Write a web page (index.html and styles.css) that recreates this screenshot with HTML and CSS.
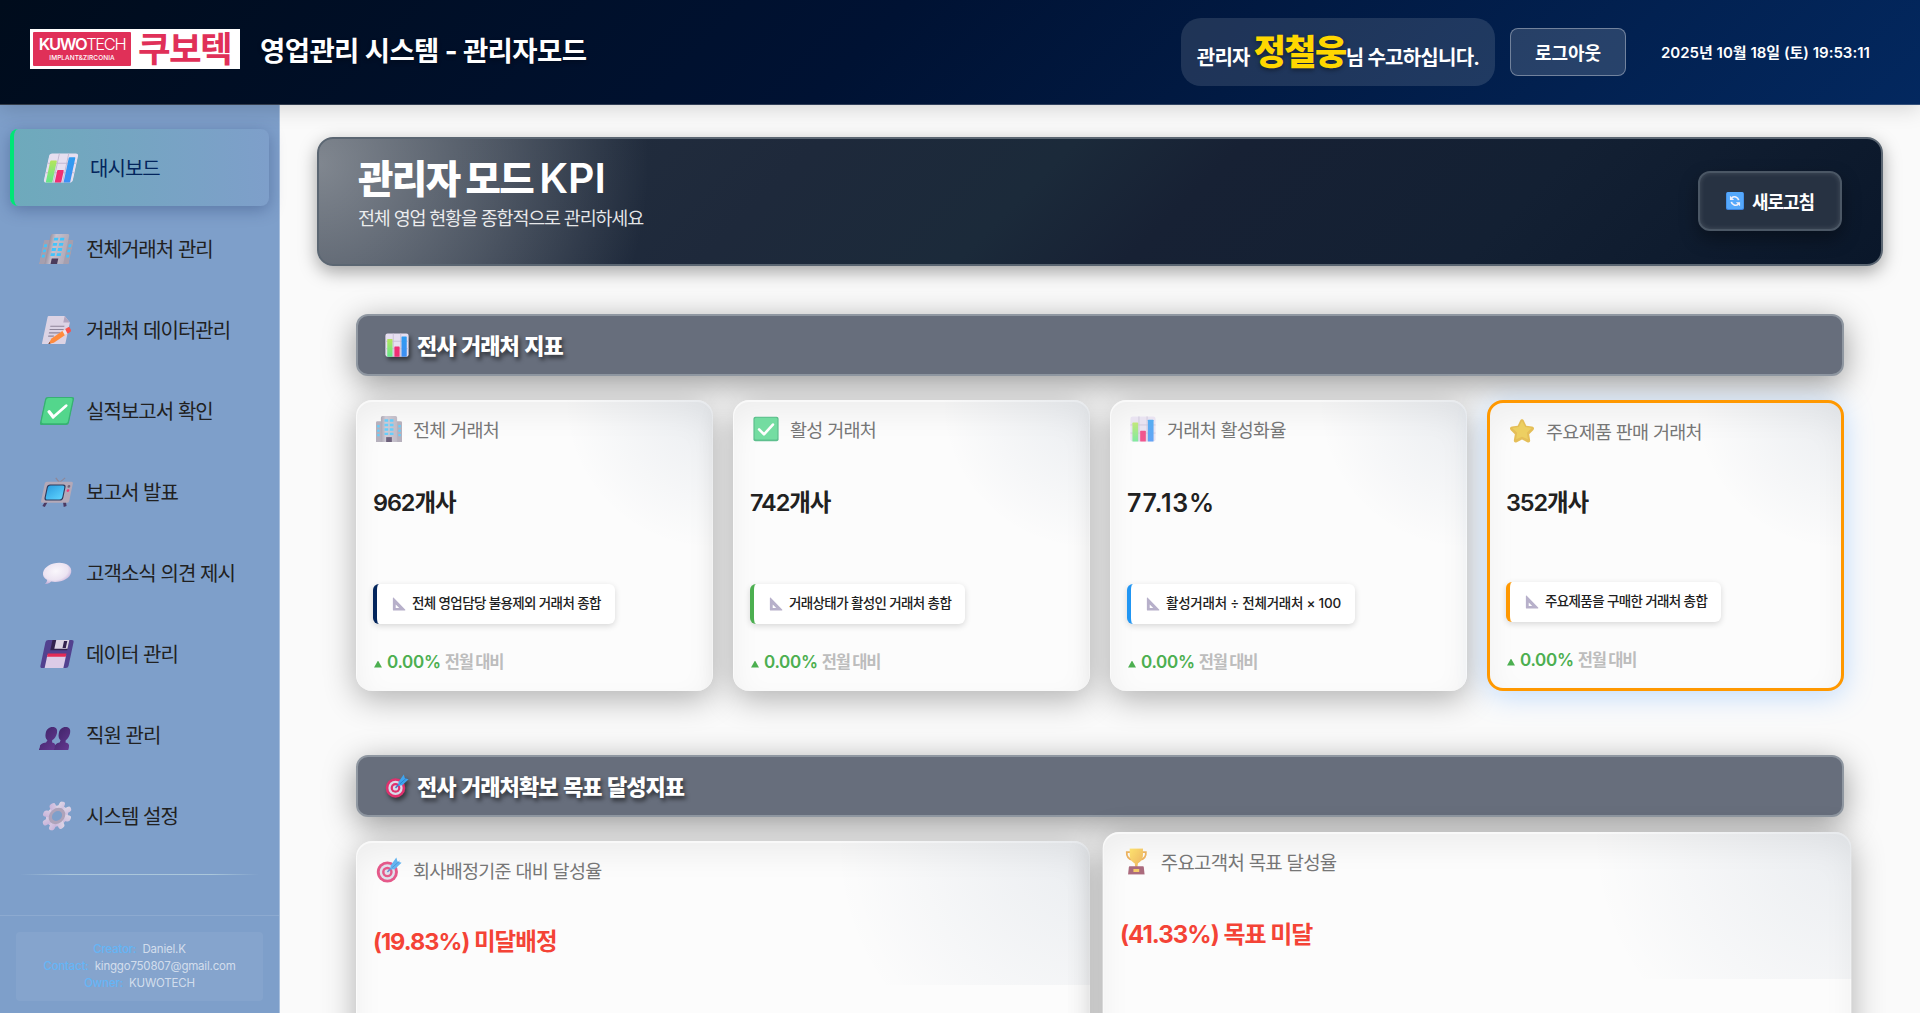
FILE: index.html
```html
<!DOCTYPE html>
<html lang="ko">
<head>
<meta charset="utf-8">
<title>영업관리 시스템 - 관리자모드</title>
<link rel="stylesheet" href="styles.css">
</head>
<body>
<svg class="sprite" aria-hidden="true">
  <defs>
    <linearGradient id="gGreen" x1="0" y1="0" x2="0" y2="1"><stop offset="0" stop-color="#b4e55c"/><stop offset="1" stop-color="#63e68b"/></linearGradient>
    <linearGradient id="gBlue" x1="0" y1="0" x2="0" y2="1"><stop offset="0" stop-color="#2f9cf0"/><stop offset="1" stop-color="#3f8ff5"/></linearGradient>
    <linearGradient id="gScreen" x1="0" y1="0" x2="1" y2="1"><stop offset="0" stop-color="#2d9ee0"/><stop offset="1" stop-color="#5fd4ff"/></linearGradient>
    <linearGradient id="gWall" x1="0" y1="0" x2="1" y2="0"><stop offset="0" stop-color="#9a94a3"/><stop offset=".3" stop-color="#c6c0cd"/><stop offset="1" stop-color="#b2acba"/></linearGradient>
    <radialGradient id="gBubble" cx=".45" cy=".4" r=".6"><stop offset="0" stop-color="#faf7fc"/><stop offset=".7" stop-color="#ece4f2"/><stop offset="1" stop-color="#cbb6dc"/></radialGradient>
    <linearGradient id="gGold" x1="0" y1="0" x2="1" y2="1"><stop offset="0" stop-color="#ffdd4d"/><stop offset="1" stop-color="#e9a13b"/></linearGradient>
    <linearGradient id="gPerson" x1="0" y1="0" x2="1" y2="1"><stop offset="0" stop-color="#41256a"/><stop offset="1" stop-color="#63388f"/></linearGradient>
    <linearGradient id="gGear" x1="0" y1="0" x2="1" y2="1"><stop offset="0" stop-color="#ded7e6"/><stop offset="1" stop-color="#c8b3da"/></linearGradient>
  </defs>
  <symbol id="i-chart" viewBox="0 0 32 32">
    <rect x="0.500" y="0.500" width="31" height="31" rx="3" fill="#e6dff0"/>
    <path d="M11 .5v31M21 .5v31M.5 11h31M.5 21h31" stroke="#c3b9d2" stroke-width="1"/>
    <rect x="3" y="8" width="7" height="23.500" rx=".8" fill="url(#gGreen)"/>
    <rect x="12.500" y="18" width="7" height="13.500" rx=".8" fill="#ef2f74"/>
    <rect x="22" y="4.500" width="7" height="27" rx=".8" fill="url(#gBlue)"/>
  </symbol>
  <symbol id="i-building" viewBox="0 0 32 32">
    <path d="M0 8a1.500 1.500 0 0 1 1.500-1.500H8V32H0zM24 6.500h6.500A1.500 1.500 0 0 1 32 8v24h-8z" fill="#a69fae"/>
    <path d="M6 2a2 2 0 0 1 2-2h16a2 2 0 0 1 2 2v30H6z" fill="url(#gWall)"/>
    <path d="M10.500 4h4.500v3h-4.500zM17 4h4.500v3H17zM10.500 9.500h4.500v3h-4.500zM17 9.500h4.500v3H17zM10.500 15h4.500v3h-4.500zM17 15h4.500v3H17zM10.500 20.500h4.500v3h-4.500zM17 20.500h4.500v3H17zM1.500 11h3v3h-3zM1.500 16.500h3v3h-3zM1.500 22h3v3h-3zM27.500 11h3v3h-3zM27.500 16.500h3v3h-3zM27.500 22h3v3h-3z" fill="#43c4fb"/>
    <path d="M12.500 26h7v6h-7z" fill="#4a3b5c"/>
  </symbol>
  <symbol id="i-memo" viewBox="0 0 32 32">
    <path d="M3 2a1 1 0 0 1 1-1h17l7 7v22a1 1 0 0 1-1 1H4a1 1 0 0 1-1-1z" fill="#dcd3e4"/>
    <path d="M21 1l7 7h-7z" fill="#b3a6bf"/>
    <path d="M8 12h15M8 15.500h15M8 19h12M8 22.500h6" stroke="#8e8599" stroke-width="1.200"/>
    <path d="M10 31l2-6 12-9.500 3.500 4.500-12 9.500z" fill="#ff8b3d"/>
    <path d="M22 17l3-2.300 3.500 4.500-3 2.300z" fill="#ece6f2"/>
    <path d="M24.500 15l2-1.500a2 2 0 0 1 3 .5l1.200 1.600a2 2 0 0 1-.4 2.800L28 20z" fill="#f8534d"/>
    <path d="M10 31l.7-2.200 1.500 1.700z" fill="#553b45"/>
  </symbol>
  <symbol id="i-check" viewBox="0 0 32 32">
    <rect x="0.500" y="1" width="31" height="30" rx="2.500" fill="#37b173"/>
    <rect x="2" y="2" width="28" height="27" rx="2" fill="#53d68c"/>
    <path d="M7.500 16.500l6 6L24.500 10.500" fill="none" stroke="#fff" stroke-width="3.200" stroke-linecap="round" stroke-linejoin="round"/>
  </symbol>
  <symbol id="i-tv" viewBox="0 0 32 32">
    <path d="M16.500 6l-5-5M16.500 6l5-5" stroke="#8f8798" stroke-width="1.300"/>
    <path d="M7 26l-2 5.500M26 26l2 5.500" stroke="#4a3a63" stroke-width="3"/>
    <rect x="1" y="5" width="30" height="22.500" rx="2" fill="#b4a9b8"/>
    <rect x="4" y="8" width="20" height="17" rx="3" fill="#2d3a5c"/>
    <rect x="5.200" y="9" width="17.600" height="15" rx="2.500" fill="url(#gScreen)"/>
    <circle cx="27.400" cy="10" r="1.500" fill="#6f6579"/><circle cx="27.400" cy="14.500" r="1.500" fill="#ed3c7b"/>
  </symbol>
  <symbol id="i-bubble" viewBox="0 0 32 32">
    <path d="M16 5c8.300 0 15 4.300 15 10.500S24.300 25.500 16 25.500c-1.500 0-3-.1-4.300-.4C10.500 26.800 8 27.800 5.500 27.500c1.300-1 1.800-2.400 1.600-4C3.300 21.500 1 18.800 1 15.500 1 9.300 7.700 5 16 5z" fill="url(#gBubble)"/>
  </symbol>
  <symbol id="i-floppy" viewBox="0 0 32 32">
    <rect x="1" y="1" width="30" height="30" rx="2.500" fill="#52418f"/>
    <path d="M8 1h18v11H8z" fill="#33224f"/><path d="M12 1h14v9.500H12z" fill="#ddd5e6"/><path d="M20.500 2h3.500v7.500h-3.500z" fill="#33224f"/>
    <path d="M6 17h20v14H6z" fill="#dccbe7"/><path d="M6 15.500h20v3.500H6z" fill="#e32b56"/>
  </symbol>
  <symbol id="i-people" viewBox="0 0 32 32">
    <path d="M0 32v-3c0-3 2-4.500 6-5l1-2.500C4.500 20 3.500 17 3.500 14c0-4 2-6.500 6-6.500s6 2.500 6 6.500c0 3-1 6-3.500 7.500l.5 2.500c3 .5 4 2 4 4v4z" fill="url(#gPerson)"/>
    <path d="M16 32v-3c0-3 1.500-4.500 4.500-5l.5-2.500C18.500 20 17.500 17 17.500 14c0-4 2-6.500 6-6.500s6 2.500 6 6.500c0 3-1 6-3 7.500l.3 2.500c3 .5 4.700 2 4.700 5v3z" fill="url(#gPerson)"/>
  </symbol>
  <symbol id="i-gear" viewBox="0 0 32 32">
    <g fill="url(#gGear)" transform="rotate(12 16 16)"><circle cx="16" cy="16" r="11.500"/>
      <rect x="12.800" y=".5" width="6.400" height="31" rx="2.800"/><rect x="12.800" y=".5" width="6.400" height="31" rx="2.800" transform="rotate(45 16 16)"/><rect x="12.800" y=".5" width="6.400" height="31" rx="2.800" transform="rotate(90 16 16)"/><rect x="12.800" y=".5" width="6.400" height="31" rx="2.800" transform="rotate(135 16 16)"/></g>
    <circle cx="16" cy="16" r="7" fill="#7e9fca" stroke="#aea3ba" stroke-width="3.400"/>
  </symbol>
  <symbol id="i-star" viewBox="0 0 32 32">
    <path d="M16 1.500c1 0 1.700.6 2.200 1.700l3.100 6.400 7 1c2.600.4 3.300 2.700 1.500 4.500l-5 5 1.200 7c.4 2.500-1.400 3.900-3.600 2.700L16 26.500l-6.400 3.300C7.400 31 5.600 29.600 6 27.100l1.200-7-5-5c-1.800-1.800-1.100-4.100 1.500-4.500l7-1 3.100-6.400c.5-1.100 1.200-1.700 2.200-1.700z" fill="#e0b030"/>
    <path d="M16 3.500l4 7.500 8 1.300-6 5.700 1.200 8.200L16 23l-7.200 3.200L10 18l-6-5.700L12 11z" fill="#eac53c"/>
  </symbol>
  <symbol id="i-target" viewBox="0 0 32 32">
    <circle cx="14" cy="18.500" r="13" fill="#e0316e"/><circle cx="14" cy="18.500" r="9.500" fill="#d9dbe9"/><circle cx="14" cy="18.500" r="6.500" fill="#e0316e"/><circle cx="14" cy="18.500" r="3.500" fill="#d9dbe9"/>
    <path d="M14 18.500l10-10" stroke="#4c75c9" stroke-width="2"/>
    <path d="M18 10.500l7-10 1.500 5L31.500 7l-8.500 8-5 .5z" fill="#3fa4ee"/><path d="M20 13L29 5" stroke="#2477c9" stroke-width="1"/>
  </symbol>
  <symbol id="i-trophy" viewBox="0 0 32 32">
    <path d="M9 4.500H4.500c-.5 5 2 9 7.500 9.500M23 4.500h4.500c.5 5-2 9-7.500 9.500" fill="none" stroke="#e9a13b" stroke-width="2.200"/>
    <path d="M8 0h16v8c0 5-3 8.500-6 10l-.8 5h-2.400L14 18c-3-1.500-6-5-6-10z" fill="url(#gGold)"/>
    <path d="M6 32l1-9.500a1 1 0 0 1 1-1h16a1 1 0 0 1 1 1l1 9.500z" fill="#97475e"/><path d="M12.500 25h7v3.500h-7z" fill="#f4bf45"/>
  </symbol>
  <symbol id="i-ruler" viewBox="0 0 32 32">
    <path fill-rule="evenodd" d="M2 2c0-1 1-1.500 2-.5l26 27c1 1 .5 2.500-1 2.500H4a2 2 0 0 1-2-2zM8.500 17v8h8z" fill="#b7b0ca"/>
  </symbol>
  <symbol id="i-refresh" viewBox="0 0 32 32">
    <rect width="32" height="32" rx="3" fill="#3b82dd"/><rect x="1" width="30" height="30" rx="3" fill="#55a8fb"/>
    <path d="M22.500 14.500A7.500 7.500 0 0 0 10 10.500M9.500 17.500A7.500 7.500 0 0 0 22 21.500" fill="none" stroke="#f3f1fb" stroke-width="3"/>
    <path d="M7 6.500V14h7.500zM25 25.500V18h-7.500z" fill="#f3f1fb"/>
  </symbol>
</svg>

<header class="topbar">
  <div class="brand">
    <div class="logo">
      <div class="logo-box"><span class="logo-name"><b>KUWO</b>TECH</span><span class="logo-tag">IMPLANT&amp;ZIRCONIA</span></div>
      <span class="logo-ko">쿠보텍</span>
    </div>
    <h1 class="app-title">영업관리 시스템 - 관리자모드</h1>
  </div>
  <div class="welcome"><span>관리자 <strong>정철웅</strong>님 수고하십니다.</span></div>
  <button class="logout">로그아웃</button>
  <time class="clock">2025년 10월 18일 (토) 19:53:11</time>
</header>

<div class="body">
  <aside class="sidebar">
    <nav class="menu">
      <a class="item active"><svg><use href="#i-chart"/></svg>대시보드</a>
      <a class="item"><svg><use href="#i-building"/></svg>전체거래처 관리</a>
      <a class="item"><svg><use href="#i-memo"/></svg>거래처 데이터관리</a>
      <a class="item"><svg><use href="#i-check"/></svg>실적보고서 확인</a>
      <a class="item"><svg><use href="#i-tv"/></svg>보고서 발표</a>
      <a class="item"><svg><use href="#i-bubble"/></svg>고객소식 의견 제시</a>
      <a class="item"><svg><use href="#i-floppy"/></svg>데이터 관리</a>
      <a class="item"><svg><use href="#i-people"/></svg>직원 관리</a>
      <a class="item"><svg><use href="#i-gear"/></svg>시스템 설정</a>
    </nav>
    <div class="divider"></div>
    <footer class="side-foot">
      <div class="credits">
        <p><span>Creator:</span> Daniel.K</p>
        <p><span>Contact:</span> kinggo750807@gmail.com</p>
        <p><span>Owner:</span> KUWOTECH</p>
      </div>
    </footer>
  </aside>

  <main class="main">
    <section class="banner">
      <div>
        <h2>관리자 모드 <span>KPI</span></h2>
        <p>전체 영업 현황을 종합적으로 관리하세요</p>
      </div>
      <button class="refresh"><svg><use href="#i-refresh"/></svg>새로고침</button>
    </section>

    <section class="group">
      <h3 class="group-title"><svg><use href="#i-chart"/></svg><span>전사 거래처 지표</span></h3>
      <div class="cards four">
        <article class="card navy">
          <div class="label"><svg><use href="#i-building"/></svg><span>전체 거래처</span></div>
          <div class="value">962개사</div>
          <div class="formula"><svg><use href="#i-ruler"/></svg><span>전체 영업담당 불용제외 거래처 종합</span></div>
          <div class="trend"><i></i><b>0.00%</b><span>전월 대비</span></div>
        </article>
        <article class="card green">
          <div class="label"><svg><use href="#i-check"/></svg><span>활성 거래처</span></div>
          <div class="value">742개사</div>
          <div class="formula"><svg><use href="#i-ruler"/></svg><span>거래상태가 활성인 거래처 총합</span></div>
          <div class="trend"><i></i><b>0.00%</b><span>전월 대비</span></div>
        </article>
        <article class="card blue">
          <div class="label"><svg><use href="#i-chart"/></svg><span>거래처 활성화율</span></div>
          <div class="value percent">77.13%</div>
          <div class="formula ratio"><svg><use href="#i-ruler"/></svg><span>활성거래처 ÷ 전체거래처 × 100</span></div>
          <div class="trend"><i></i><b>0.00%</b><span>전월 대비</span></div>
        </article>
        <article class="card orange">
          <div class="label"><svg><use href="#i-star"/></svg><span>주요제품 판매 거래처</span></div>
          <div class="value">352개사</div>
          <div class="formula"><svg><use href="#i-ruler"/></svg><span>주요제품을 구매한 거래처 총합</span></div>
          <div class="trend"><i></i><b>0.00%</b><span>전월 대비</span></div>
        </article>
      </div>
    </section>

    <section class="group second">
      <h3 class="group-title"><svg><use href="#i-target"/></svg><span>전사 거래처확보 목표 달성지표</span></h3>
      <div class="cards two">
        <article class="card">
          <div class="label"><svg><use href="#i-target"/></svg><span>회사배정기준 대비 달성율</span></div>
          <div class="value miss">(19.83%) 미달배정</div>
        </article>
        <article class="card raised">
          <div class="label"><svg><use href="#i-trophy"/></svg><span>주요고객처 목표 달성율</span></div>
          <div class="value miss">(41.33%) 목표 미달</div>
        </article>
      </div>
    </section>
  </main>
</div>
</body>
</html>
```
FILE: styles.css
```css
* { box-sizing: border-box; margin: 0; padding: 0; }

body {
  width: 1920px;
  height: 1013px;
  overflow: hidden;
  background: #fafafa;
  color: #212121;
  font-family: "Inter", "Noto Sans CJK KR", sans-serif;
  white-space: nowrap;
}

.sprite { position: absolute; width: 0; height: 0; }
svg { display: block; flex: none; }
button { font: inherit; color: inherit; }

/* Top bar */
.topbar {
  position: relative;
  z-index: 2;
  display: flex;
  align-items: center;
  height: 105px;
  padding: 0 30px 0 30px;
  background: linear-gradient(135deg, #000c1c 0%, #001233 45%, #03285f 100%);
  border-bottom: 1px solid rgba(255, 255, 255, .2);
  box-shadow: 0 4px 20px rgba(0, 0, 0, .15);
  color: #fff;
}
.brand { display: flex; align-items: center; gap: 20px; margin-right: auto; padding-bottom: 6px; }
.logo { display: flex; align-items: center; gap: 7px; width: 210px; height: 40px; padding-left: 3px; background: #fff; }
.logo-box {
  display: flex; flex-direction: column; align-items: center;
  width: 98px; height: 34px; padding-top: 4px;
  background: #e03058; border-radius: 1px;
}
.logo-name { font-size: 16.500px; line-height: 17px; font-weight: 300; letter-spacing: -1.350px; }
.logo-name b { font-weight: 600; }
.logo-tag { margin-top: 2px; font-size: 6.500px; line-height: 7px; font-weight: 500; letter-spacing: .05px; }
.logo-ko { color: #e03058; font-size: 35.500px; line-height: 40px; font-weight: 700; letter-spacing: -1.600px; padding-top: 1px; }
.app-title { font-size: 27.500px; line-height: 40px; font-weight: 700; letter-spacing: -.6px; padding-top: 4px; text-shadow: 0 2px 4px rgba(0, 0, 0, .3); }
.welcome {
  display: flex; align-items: center; justify-content: center;
  width: 314px; height: 68px;
  background: rgba(255, 255, 255, .12);
  border-radius: 20px;
  font-size: 20px; line-height: 60px; font-weight: 700; letter-spacing: -.75px;
}
.welcome > span { padding-top: 6px; }
.welcome strong { color: #ffd700; font-size: 35px; font-weight: 900; letter-spacing: -1.500px; text-shadow: 0 2px 4px rgba(0, 0, 0, .4); }
.logout {
  width: 116px; height: 48px; margin-left: 15px;
  background: rgba(255, 255, 255, .15);
  border: 1px solid rgba(255, 255, 255, .35);
  border-radius: 8px;
  font-size: 18px; font-weight: 700; letter-spacing: -.1px;
}
.clock { width: 210px; margin: 0 19px 0 35px; padding-bottom: 2px; font-size: 15px; font-weight: 600; letter-spacing: 0; }

/* Sidebar */
.body { display: flex; height: 908px; overflow: hidden; }
.sidebar {
  display: flex; flex-direction: column; flex: none;
  width: 280px; padding-top: 24px;
  background: #7e9fca;
  border-right: 1px solid #a9c0de;
}
.menu { display: flex; flex-direction: column; gap: 4px; padding: 0 10px; }
.item {
  display: flex; align-items: center; gap: 12px;
  height: 77px; padding-left: 32px;
  font-size: 20px; font-weight: 400; letter-spacing: -.95px;
}
.item svg { width: 30px; height: 30px; margin-right: 2px; transform: skewX(-12deg); }
.active {
  border-left: 4px solid #00e676;
  border-radius: 8px;
  background: linear-gradient(90deg, rgba(80, 190, 160, .35), rgba(126, 159, 202, 0));
  box-shadow: 0 4px 16px rgba(30, 50, 100, .35);
  color: #03255c;
}
.divider { height: 1px; margin: 20px 20px 0; background: linear-gradient(90deg, transparent, rgba(200, 225, 230, .6) 20%, rgba(200, 225, 230, .6) 80%, transparent); }
.side-foot { margin-top: auto; height: 98px; padding: 16px; border-top: 1px solid rgba(255, 255, 255, .12); }
.credits {
  height: 69px; padding: 9px 0;
  border-radius: 4px;
  background: rgba(255, 255, 255, .06);
  color: rgba(255, 255, 255, .65);
  text-align: center;
  font-size: 11.500px; line-height: 17px; letter-spacing: -.2px;
}
.credits span { margin-right: 3px; color: #64b5f6; font-weight: 500; }

/* Page banner */
.main { flex: 1; min-width: 0; padding: 32px 37px 0; }
.banner {
  display: flex; align-items: center; justify-content: space-between;
  height: 129px; padding: 0 39px;
  border: 2px solid #5b6672;
  border-radius: 16px;
  background:
    radial-gradient(ellipse 330px 330px at 0 20%, rgba(255, 255, 255, .42), rgba(255, 255, 255, .2) 55%, transparent),
    linear-gradient(135deg, #25303f 0%, #1e293b 30%, #1b2a3a 45%, #172134 55%, #132033 75%, #0a172a 100%);
  box-shadow: 0 6px 18px rgba(0, 0, 0, .35);
  color: #fff;
}
.banner h2 { font-size: 38.500px; line-height: 44px; font-weight: 900; letter-spacing: -1.600px; margin-top: -17px; }
.banner h2 span { font-size: 41px; font-weight: 600; letter-spacing: 0; }
.banner p { margin-top: 5px; font-size: 18.500px; line-height: 24px; letter-spacing: -1.200px; color: rgba(255, 255, 255, .88); }
.refresh {
  display: flex; align-items: center; justify-content: center; gap: 8px;
  width: 144px; height: 60px; margin-bottom: 1px; padding-bottom: 1px;
  border: 2px solid #4b5765; border-radius: 12px;
  background: #273242;
  box-shadow: 0 8px 18px rgba(0, 0, 0, .35), inset 0 0 5px rgba(255, 255, 255, .15);
  font-size: 18px; font-weight: 700; letter-spacing: -1px;
}
.refresh svg { width: 18px; height: 18px; }

/* KPI groups */
.group { padding: 0 39px; margin-top: 48px; }
.second { margin-top: 64px; }
.group-title {
  display: flex; align-items: center; gap: 8px;
  height: 62px; padding-left: 27px;
  border: 2px solid #8f97a1; border-radius: 12px;
  background: #676e7c;
  box-shadow: 0 8px 32px rgba(0, 0, 0, .4);
  color: #fff;
  font-size: 22px; font-weight: 900; letter-spacing: -.95px; word-spacing: 2px;
  text-shadow: 2px 3px 4px rgba(0, 0, 0, .6);
}
.group-title svg { width: 24px; height: 24px; filter: drop-shadow(2px 3px 2px rgba(0, 0, 0, .5)); }
.group-title span { padding-bottom: 2px; }
.cards { display: grid; gap: 20px; margin-top: 24px; }
.four { grid-template-columns: repeat(4, 1fr); }
.two { grid-template-columns: repeat(2, 1fr); }
.card {
  position: relative;
  height: 291px; padding: 14px 17px;
  border-radius: 16px;
  background: #fcfcfc;
  box-shadow: 0 8px 32px rgba(0, 0, 0, .3), inset 0 1px 0 1px rgba(255, 255, 255, .6), inset 0 14px 30px rgba(0, 0, 0, .06);
}
.card::before {
  content: "";
  position: absolute; top: 0; right: 0;
  width: 50%; height: 50%;
  border-top-right-radius: 16px;
  background: radial-gradient(circle at 100% 0, rgba(10, 45, 90, .075), transparent 65%);
}
.label {
  display: flex; align-items: center; gap: 11px;
  height: 30px; padding-left: 3px;
  color: #767676; font-size: 18.500px; letter-spacing: -.7px;
}
.label svg { width: 26px; height: 26px; opacity: .8; }
.value { margin-top: 42px; font-size: 23.500px; line-height: 34px; font-weight: 600; letter-spacing: -1.100px; }
.percent { font-size: 25px; letter-spacing: .7px; }
.formula {
  display: flex; align-items: center; gap: 6px;
  width: max-content; height: 40px; margin-top: 64px; padding: 0 14px 0 15px;
  border-left: 4px solid #03255c; border-radius: 6px;
  background: #fff;
  box-shadow: 0 2px 6px rgba(0, 0, 0, .15);
  font-size: 13.500px; font-weight: 500; letter-spacing: -.63px;
}
.formula svg { width: 14px; height: 14px; }
.formula span { padding-bottom: 4px; }
.ratio { letter-spacing: -.25px; }
.trend { display: flex; align-items: center; margin-top: 26px; height: 24px; font-size: 17px; }
.trend i { width: 8px; height: 7px; margin: 4px 5px 0 1px; background: #4caf50; clip-path: polygon(50% 0, 100% 100%, 0 100%); }
.trend b { color: #4caf50; font-weight: 600; letter-spacing: -.3px; }
.trend span { margin-left: 4px; padding-bottom: 2px; color: #bdbdbd; font-size: 16.500px; font-weight: 700; letter-spacing: -1.200px; }
.green .formula { border-color: #4caf50; }
.blue .formula { border-color: #2196f3; }
.orange {
  padding: 13px 16px;
  border: 3px solid #ff9800;
  box-shadow: 0 4px 28px rgba(100, 170, 255, .4), inset 0 14px 30px rgba(0, 0, 0, .05);
}
.orange::before { border-top-right-radius: 13px; }
.orange .value { margin-top: 40px; }
.orange .formula { margin-top: 62px; border-color: #ff9800; }
.two .card { height: 288px; }
.two .value { margin-top: 40px; }
.value.miss { color: #f44336; font-weight: 700; letter-spacing: -.95px; }
.raised { transform-origin: 50% 0; transform: translateY(-9px) scale(1.02); }
```
